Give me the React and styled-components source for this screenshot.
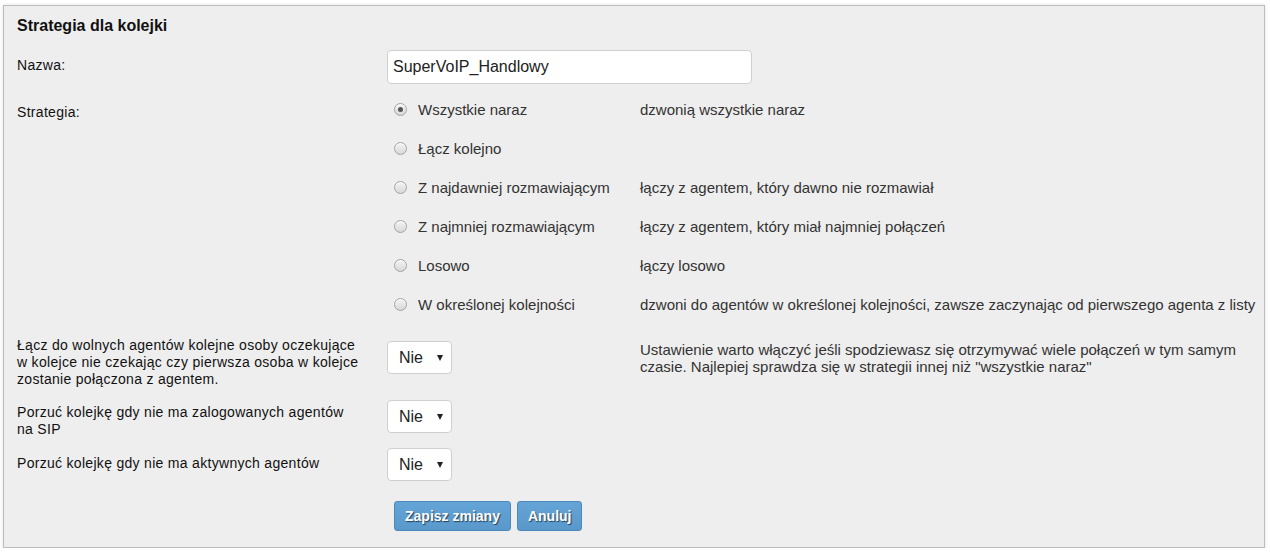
import React from "react";
import styled, { createGlobalStyle } from "styled-components";

const Global = createGlobalStyle`
  html, body { margin: 0; padding: 0; background: #fff; }
  body { font-family: Arial, "Liberation Sans", sans-serif; color: #222; }
  * { box-sizing: border-box; }
`;

const Panel = styled.section`
  margin: 5px 5px 0 3px;
  border: 1px solid #bdbdbd;
  background: #eeeeee;
  box-shadow: 0 0 4px rgba(0, 0, 0, 0.12);
  padding: 10px 13px 16px 13px;
`;

const Title = styled.h2`
  margin: 0;
  font-size: 16px;
  line-height: 20px;
  font-weight: bold;
  color: #111;
`;

const Row = styled.div`
  display: grid;
  grid-template-columns: 370px 253px 1fr;
  align-items: start;
  margin-top: ${(p) => p.$mt}px;
`;

const Label = styled.div`
  font-size: 14px;
  line-height: 17px;
  letter-spacing: 0.3px;
  color: #111;
  padding-top: ${(p) => p.$pt || 0}px;
  padding-right: 26px;
`;

const Control = styled.div`
  grid-column: ${(p) => (p.$wide ? "2 / 4" : "auto")};
  padding-top: ${(p) => p.$pt || 0}px;
`;

const Desc = styled.div`
  font-size: 15px;
  line-height: 17px;
  color: #333;
  padding-top: ${(p) => p.$pt || 0}px;
`;

const TextInput = styled.input`
  display: block;
  width: 365px;
  height: 34px;
  border: 1px solid #cfcfcf;
  border-radius: 4px;
  background: #fff;
  padding: 0 5px;
  font-family: Arial, "Liberation Sans", sans-serif;
  font-size: 16px;
  color: #222;
  outline: none;
`;

const Options = styled.div`
  grid-column: 2 / 4;
  display: flex;
  flex-direction: column;
`;

const Option = styled.label`
  display: grid;
  grid-template-columns: 253px 1fr;
  align-items: center;
  height: 39px;
`;

const OptionMain = styled.span`
  display: flex;
  align-items: center;
  gap: 11px;
  padding-left: 7px;
  font-size: 15px;
  color: #333;
`;

const Radio = styled.span`
  width: 13px;
  height: 13px;
  border-radius: 50%;
  border: 1px solid #a3a3a3;
  background: linear-gradient(#f4f4f4, #d8d8d8);
  box-shadow: inset 0 1px 1px rgba(255, 255, 255, 0.8);
  display: inline-flex;
  align-items: center;
  justify-content: center;
  flex: none;
  &::after {
    content: "";
    width: 5px;
    height: 5px;
    border-radius: 50%;
    background: ${(p) => (p.$checked ? "#555" : "transparent")};
  }
`;

const OptionDesc = styled.span`
  font-size: 15px;
  color: #333;
  white-space: nowrap;
`;

const SelectWrap = styled.div`
  position: relative;
  width: 65px;
  height: 33px;
`;

const Select = styled.select`
  appearance: none;
  -webkit-appearance: none;
  width: 100%;
  height: 100%;
  border: 1px solid #cfcfcf;
  border-radius: 4px;
  background: #fff;
  padding: 0 0 0 11px;
  font-family: Arial, "Liberation Sans", sans-serif;
  font-size: 16px;
  color: #222;
  outline: none;
`;

const Caret = styled.span`
  position: absolute;
  left: 50px;
  top: 14px;
  width: 0;
  height: 0;
  border-left: 3.5px solid transparent;
  border-right: 3.5px solid transparent;
  border-top: 6px solid #222;
  pointer-events: none;
`;

const Buttons = styled.div`
  grid-column: 2 / 4;
  display: flex;
  gap: 6px;
  padding-left: 7px;
`;

const Button = styled.button`
  height: 30px;
  padding: 0 10px;
  border: 1px solid #4b88bb;
  border-radius: 3px;
  background: linear-gradient(#64a4d6, #5898cb);
  color: #fff;
  font-family: Arial, "Liberation Sans", sans-serif;
  font-size: 14px;
  font-weight: bold;
  text-shadow: 1px 1px 1px #23405e;
  cursor: pointer;
`;

const YesNo = () => (
  <SelectWrap>
    <Select defaultValue="0">
      <option value="0">Nie</option>
      <option value="1">Tak</option>
    </Select>
    <Caret />
  </SelectWrap>
);

const strategies = [
  { name: "Wszystkie naraz", desc: "dzwonią wszystkie naraz", checked: true },
  { name: "Łącz kolejno", desc: "" },
  { name: "Z najdawniej rozmawiającym", desc: "łączy z agentem, który dawno nie rozmawiał" },
  { name: "Z najmniej rozmawiającym", desc: "łączy z agentem, który miał najmniej połączeń" },
  { name: "Losowo", desc: "łączy losowo" },
  {
    name: "W określonej kolejności",
    desc: "dzwoni do agentów w określonej kolejności, zawsze zaczynając od pierwszego agenta z listy",
  },
];

export default function App() {
  return (
    <>
      <Global />
      <Panel>
        <Title>Strategia dla kolejki</Title>

        <Row $mt={14}>
          <Label $pt={7}>Nazwa:</Label>
          <Control $wide>
            <TextInput defaultValue="SuperVoIP_Handlowy" />
          </Control>
        </Row>

        <Row $mt={6}>
          <Label $pt={14}>Strategia:</Label>
          <Options>
            {strategies.map((s) => (
              <Option key={s.name}>
                <OptionMain>
                  <Radio $checked={s.checked} />
                  {s.name}
                </OptionMain>
                <OptionDesc>{s.desc}</OptionDesc>
              </Option>
            ))}
          </Options>
        </Row>

        <Row $mt={12}>
          <Label $pt={1}>
            Łącz do wolnych agentów kolejne osoby oczekujące w kolejce nie czekając czy pierwsza
            osoba w kolejce zostanie połączona z agentem.
          </Label>
          <Control $pt={5}>
            <YesNo />
          </Control>
          <Desc $pt={5}>
            Ustawienie warto włączyć jeśli spodziewasz się otrzymywać wiele połączeń w tym samym
            czasie. Najlepiej sprawdza się w strategii innej niż "wszystkie naraz"
          </Desc>
        </Row>

        <Row $mt={12}>
          <Label $pt={4}>Porzuć kolejkę gdy nie ma zalogowanych agentów na SIP</Label>
          <Control>
            <YesNo />
          </Control>
        </Row>

        <Row $mt={10}>
          <Label $pt={7}>Porzuć kolejkę gdy nie ma aktywnych agentów</Label>
          <Control>
            <YesNo />
          </Control>
        </Row>

        <Row $mt={20}>
          <span />
          <Buttons>
            <Button type="button">Zapisz zmiany</Button>
            <Button type="button">Anuluj</Button>
          </Buttons>
        </Row>
      </Panel>
    </>
  );
}
